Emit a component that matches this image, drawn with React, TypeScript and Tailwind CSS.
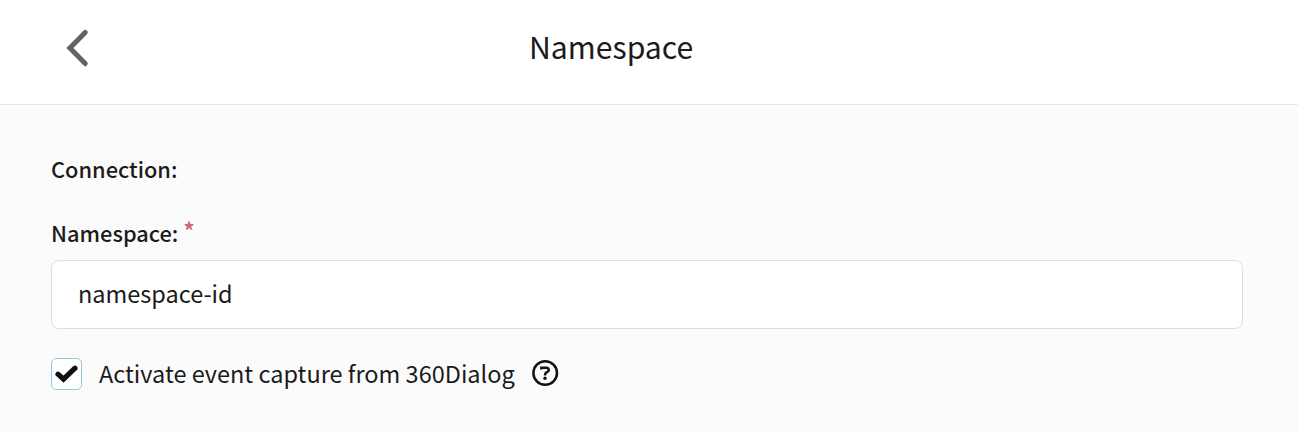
import React from 'react';

const App = () => {
  return (
    <div className="flex h-[432px] w-full flex-col bg-[#fbfbfb] font-['Noto_Sans_CJK_SC','Noto_Sans',sans-serif] text-[#1b1b1b]">
      {/* Header */}
      <header className="flex h-[105px] items-start border-b border-[#e5e5e5] bg-white">
        <svg
          className="mt-[28px] ml-[64px]"
          width="26"
          height="40"
          viewBox="0 0 26 40"
          fill="none"
          stroke="#636363"
          strokeWidth="5"
          strokeLinecap="round"
          strokeLinejoin="miter"
        >
          <path d="M21.2 4.4 L5.9 20 L21.2 35.6" />
        </svg>
        <h1 className="mt-[24px] ml-[439px] text-[30.2px] leading-[44px]">Namespace</h1>
      </header>

      <main className="flex flex-col px-[51px] pt-[48px] text-[23.5px]">
        <p className="text-[21.8px] leading-8 font-medium">Connection:</p>
        <label className="mt-8 flex text-[21.8px] leading-8 font-medium">
          Namespace:
          <span className="-mt-[4px] ml-[5px] text-[22px] font-bold text-[#cf6679]">*</span>
        </label>
        <div className="mt-[11px] flex h-[69px] w-[1192px] items-center rounded-lg border border-[#dedede] bg-white px-[26px] pb-[2px]">
          namespace-id
        </div>
        <div className="mt-[29px] flex h-8 items-center">
          <span className="flex h-8 w-[31px] items-center justify-center rounded-[5px] border border-[#97c9da] bg-white">
            <svg
              width="23"
              height="18"
              viewBox="0 0 23 18"
              fill="none"
              stroke="#111"
              strokeWidth="5.2"
              strokeLinecap="round"
            >
              <path d="M3 9.2 L8.5 14.2 L20 3.2" />
            </svg>
          </span>
          <span className="ml-[17px]">Activate event capture from 360Dialog</span>
          <svg className="mb-[2px] ml-4" width="28" height="28" viewBox="0 0 28 28" fill="none" stroke="#111">
            <circle cx="14.2" cy="14" r="11.8" strokeWidth="2.5" />
            <path d="M10.3 10.4 V8.7 H15.3 C18.3 8.7 18.4 12.2 16.4 12.8 C14.6 13.4 14 13.9 14 16.4" strokeWidth="2.4" />
            <circle cx="14" cy="19.3" r="1.7" fill="#111" stroke="none" />
          </svg>
        </div>
      </main>
    </div>
  );
};

export default App;
